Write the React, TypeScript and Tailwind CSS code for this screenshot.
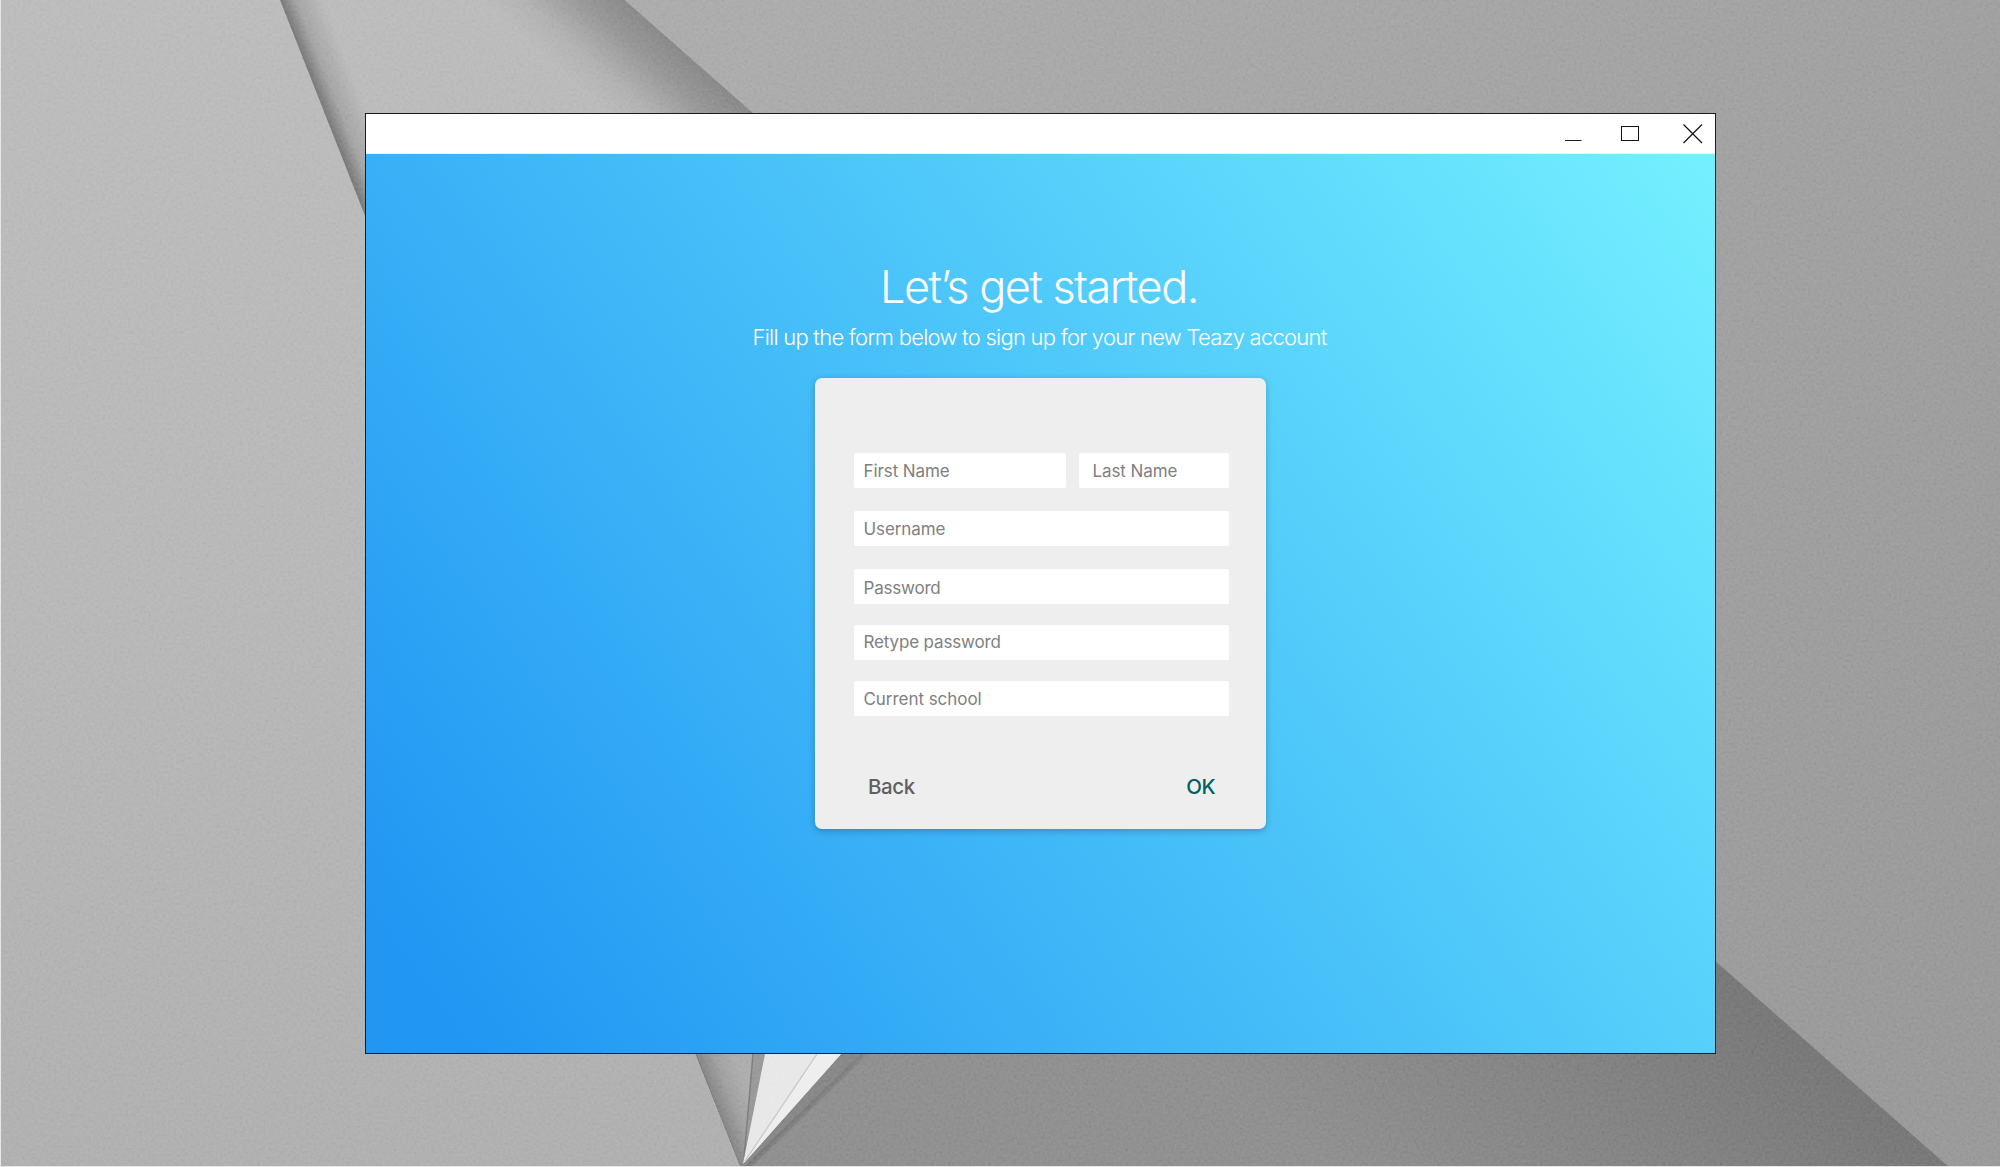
import React from "react";

function Wallpaper() {
  return (
    <svg className="absolute inset-0 h-full w-full" viewBox="0 0 2000 1167" preserveAspectRatio="none" aria-hidden="true">
      <defs>
        <linearGradient id="leftSheet" gradientUnits="userSpaceOnUse" x1="200" y1="0" x2="300" y2="1167">
          <stop offset="0" stopColor="#bdbdbd" />
          <stop offset="0.5" stopColor="#b9b9b9" />
          <stop offset="1" stopColor="#b1b1b1" />
        </linearGradient>
        <linearGradient id="rightSheet" gradientUnits="userSpaceOnUse" x1="800" y1="0" x2="2000" y2="900">
          <stop offset="0" stopColor="#adadad" />
          <stop offset="0.5" stopColor="#a4a4a4" />
          <stop offset="1" stopColor="#9b9b9b" />
        </linearGradient>
        <linearGradient id="middleSheet" gradientUnits="userSpaceOnUse" x1="400" y1="0" x2="1100" y2="1167">
          <stop offset="0" stopColor="#bdbdbd" />
          <stop offset="0.3" stopColor="#b9b9b9" />
          <stop offset="0.8" stopColor="#929292" />
          <stop offset="1" stopColor="#8e8e8e" />
        </linearGradient>
        <linearGradient id="leftShade" gradientUnits="userSpaceOnUse" x1="281" y1="0" x2="318" y2="-14.6">
          <stop offset="0" stopColor="#000" stopOpacity="0.34" />
          <stop offset="0.35" stopColor="#000" stopOpacity="0.12" />
          <stop offset="1" stopColor="#000" stopOpacity="0" />
        </linearGradient>
        <linearGradient id="rightShade" gradientUnits="userSpaceOnUse" x1="625" y1="0" x2="562" y2="71.5">
          <stop offset="0" stopColor="#000" stopOpacity="0.26" />
          <stop offset="0.3" stopColor="#000" stopOpacity="0.19" />
          <stop offset="0.7" stopColor="#000" stopOpacity="0.05" />
          <stop offset="1" stopColor="#000" stopOpacity="0" />
        </linearGradient>
        <linearGradient id="lowSheet" gradientUnits="userSpaceOnUse" x1="1832" y1="1063" x2="1560" y2="1371">
          <stop offset="0" stopColor="#797979" />
          <stop offset="0.3" stopColor="#818181" />
          <stop offset="1" stopColor="#919191" />
        </linearGradient>
        <linearGradient id="lowShade" gradientUnits="userSpaceOnUse" x1="800" y1="1113" x2="806" y2="1119">
          <stop offset="0" stopColor="#7a7a7a" />
          <stop offset="1" stopColor="#7a7a7a" stopOpacity="0" />
        </linearGradient>
        <linearGradient id="foldShade" gradientUnits="userSpaceOnUse" x1="717" y1="1110" x2="750" y2="1097">
          <stop offset="0" stopColor="#868686" />
          <stop offset="0.5" stopColor="#a2a2a2" />
          <stop offset="1" stopColor="#aeaeae" />
        </linearGradient>
        <filter id="grain" x="0" y="0" width="100%" height="100%" colorInterpolationFilters="sRGB">
          <feTurbulence type="fractalNoise" baseFrequency="0.35" numOctaves="3" seed="4" />
          <feColorMatrix type="matrix" values="0.7 0.7 0.7 0 -0.55 0.7 0.7 0.7 0 -0.55 0.7 0.7 0.7 0 -0.55 0 0 0 0 1" />
        </filter>
      </defs>
      <rect width="2000" height="1167" fill="url(#leftSheet)" />
      <path d="M280 0H2000V1167H740.500L696 1055L365.500 217Z" fill="url(#middleSheet)" />
      <path d="M280 0H340L800 1167H740.500L696 1055L365.500 217Z" fill="url(#leftShade)" />
      <path d="M480 0H625L960 295H480Z" fill="url(#rightShade)" />
      <path d="M740 900H1647L1949 1167H741Z" fill="url(#lowSheet)" />
      <path d="M625 0H2000V1167H1949Z" fill="url(#rightSheet)" />
      <path d="M696 1054H754L743 1166H740Z" fill="url(#foldShade)" />
      <path d="M753 1054H766L744 1160Z" fill="#9b9b9b" />
      <path d="M753 1054L744 1158" stroke="#808080" strokeWidth="1.500" />
      <path d="M841 1054H861L745 1166H741Z" fill="#898989" />
      <path d="M861 1054H869L753 1166H745Z" fill="url(#lowShade)" />
      <path d="M765 1054H841L743 1164Z" fill="#e8e8e8" />
      <path d="M817 1054H841L744 1163Z" fill="#eeeeee" />
      <path d="M817 1054L745 1161" stroke="#c4c4c4" strokeWidth="1.200" />
      <rect width="2000" height="1167" filter="url(#grain)" opacity="0.13" className="mix-blend-soft-light" />
      <path d="M0.500 0V1166.500H2000" fill="none" stroke="#e6e6e6" />
    </svg>
  );
}

function TitleBar() {
  return (
    <div className="flex h-10 shrink-0 items-center justify-end border-b border-[#e8f4f6] bg-white pr-[12px]">
      <button aria-label="Minimize" className="mr-[38px]">
        <svg width="18" height="20" fill="none" stroke="#222">
          <path d="M1 16.500H17.500" />
        </svg>
      </button>
      <button aria-label="Maximize" className="mr-[43px]">
        <svg width="20" height="20" fill="none" stroke="#111">
          <rect x="1.500" y="2.500" width="17" height="14" />
        </svg>
      </button>
      <button aria-label="Close">
        <svg width="20" height="20" fill="none" stroke="#111" strokeWidth="1.200">
          <path d="M0.500 0.500L19 19M19 0.500L0.500 19" />
        </svg>
      </button>
    </div>
  );
}

function Field({ label, type = "text", className }: { label: string; type?: string; className: string }) {
  return (
    <input
      type={type}
      placeholder={label}
      aria-label={label}
      className={`block h-[35px] rounded-[2px] bg-white text-[17px] leading-5 outline-none placeholder:text-[#808080] ${className}`}
    />
  );
}

function SignUpCard() {
  return (
    <form className="mt-[27px] h-[451px] w-[451px] shrink-0 rounded-[7px] bg-[#eeeeee] pt-[75px] pr-[37px] pl-[39px] shadow-[0_2px_7px_rgba(0,0,0,0.24)]">
      <div className="flex justify-between">
        <Field label="First Name" className="w-[212px] pt-px pl-[9.500px] tracking-[-0.1px]" />
        <Field label="Last Name" className="w-[150px] pt-px pl-[13.500px] tracking-[-0.1px]" />
      </div>
      <Field label="Username" className="mt-[23px] w-full pl-[9.500px] tracking-[-0.1px]" />
      <Field label="Password" type="password" className="mt-[23px] w-full pt-[3px] pl-[9.500px] tracking-[-0.2px]" />
      <Field label="Retype password" type="password" className="mt-[21px] w-full pb-[2px] pl-[9.500px] tracking-[-0.15px]" />
      <Field label="Current school" className="mt-[21px] w-full pt-px pl-[9.500px] tracking-[-0.05px]" />
      <div className="mt-[57px] flex justify-between pr-[14px] pl-[14px] text-[20.500px] leading-[28px] font-medium">
        <button type="button" className="tracking-[-0.4px] text-[#606060]">Back</button>
        <button type="button" className="tracking-[-0.5px] text-[#006064]">OK</button>
      </div>
    </form>
  );
}

export default function App() {
  return (
    <div className="relative h-[1167px] w-[2000px] overflow-hidden bg-[#b0b0b0] font-['Inter',sans-serif]">
      <Wallpaper />
      <div className="relative mt-[113px] ml-[365px] flex h-[941px] w-[1351px] flex-col border border-[#1c1c1c]">
        <TitleBar />
        <main className="flex flex-1 flex-col items-center bg-[linear-gradient(54deg,#2196f3_5%,#50c9fa_60%,#75f1ff_101%)]">
          <h1 className="mt-[105px] mr-[3px] text-[45px] leading-[56px] font-light tracking-[-1.5px] whitespace-nowrap text-white">Let’s get started.</h1>
          <p className="mt-[8px] mr-[2px] text-[22px] leading-[28px] font-light tracking-[-0.75px] whitespace-nowrap text-white">
            Fill up the form below to sign up for your new Teazy account
          </p>
          <SignUpCard />
        </main>
      </div>
    </div>
  );
}
